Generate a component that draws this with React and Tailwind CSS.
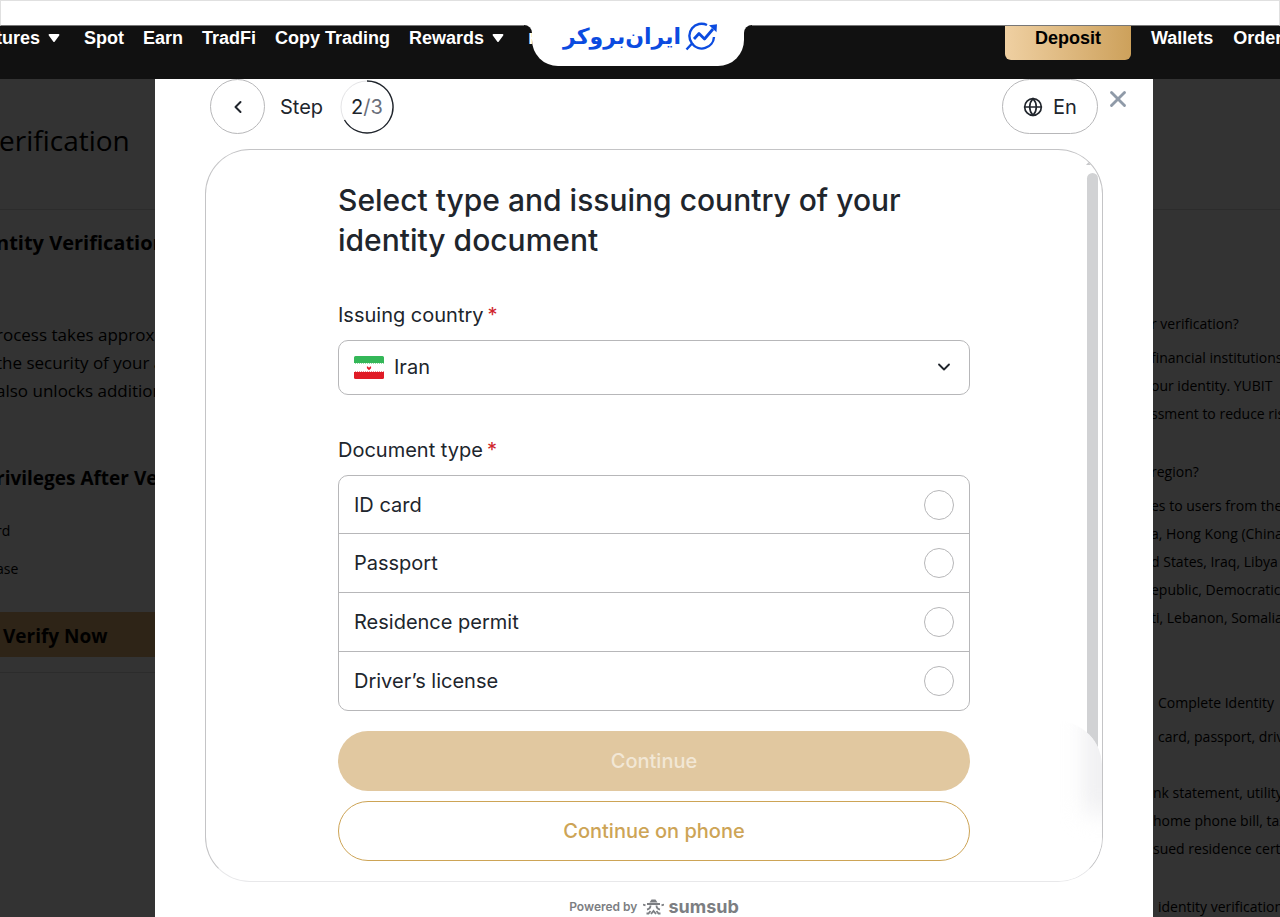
import React from "react";
import { X, Globe, ChevronLeft, ChevronDown } from "lucide-react";

const documentTypes = ["ID card", "Passport", "Residence permit", "Driver’s license"];

const faq = [
  {
    question: "r verification?",
    gap: "mt-[100px]",
    lines: ["financial institutions", "our identity. YUBIT", "ssment to reduce risk"],
  },
  {
    question: "region?",
    gap: "mt-[30px]",
    lines: [
      "es to users from the",
      "a, Hong Kong (China)",
      "d States, Iraq, Libya",
      "epublic, Democratic",
      "ti, Lebanon, Somalia",
    ],
  },
  {
    question: "Complete Identity",
    gap: "mt-[57px]",
    indent: true,
    lines: ["card, passport, driver", "", "nk statement, utility", "home phone bill, tax", "sued residence certif"],
  },
  { question: "identity verification", gap: "mt-[30px]", indent: true, lines: [] },
];

const Caret = () => (
  <svg width="12" height="8" viewBox="0 0 12 8" fill="currentColor" aria-hidden="true">
    <path d="M1.500 0h9c.8 0 1.200.8.7 1.400L6.800 7.400a1 1 0 0 1-1.600 0L.8 1.400C.3.8.7 0 1.500 0z" />
  </svg>
);

const BrokerMark = () => (
  <svg width="32" height="30" viewBox="0 0 32 30" fill="none" stroke="#0b4be0" strokeWidth="2.4" aria-hidden="true">
    <path d="M22 4A12.200 12.200 0 0 0 7 22.500L1.500 28.500" />
    <path d="M7 22.500A12.200 12.200 0 0 0 29 16" />
    <path d="M9 18l5-5.500 5.500 5.500L28 8" strokeLinejoin="round" strokeWidth="2.8" />
    <path d="M24 4.200l8-1-.5 8z" fill="#0b4be0" stroke="none" />
  </svg>
);

const IranFlag = () => (
  <svg width="30" height="24" viewBox="0 0 30 24" aria-hidden="true">
    <rect y="1" width="30" height="22" rx="1.500" fill="#fff" />
    <path d="M1.500 0h27A1.500 1.500 0 0 1 30 1.500V7.500H0V1.500A1.500 1.500 0 0 1 1.500 0z" fill="#34b758" />
    <path d="M0 15.500h30v6a1.500 1.500 0 0 1-1.500 1.500h-27A1.500 1.500 0 0 1 0 21.500z" fill="#e01b26" />
    <path d="M0 7.500h30M0 15.500h30" stroke="#fff" strokeWidth="1" strokeDasharray="1 1" />
    <path d="M13.500 10.500v1.500l1.500 1.500 1.500-1.500v-1.500M15 11v2.500" stroke="#e01b26" strokeWidth="1.200" fill="none" />
  </svg>
);

const SumsubMark = () => (
  <svg width="21" height="16" viewBox="0 0 21 16" fill="none" stroke="#7c7e82" strokeWidth="2" aria-hidden="true">
    <path d="M6.500 3.500L8.500.5h4l2 3z" fill="#7c7e82" stroke="none" />
    <path d="M4 5h13" />
    <path d="M0 5.500l2.500.8M18.500 6.300l2.500-.8" strokeWidth="1.800" />
    <path d="M7.500 6.500c0 2-1 3.500-3.500 4M13.500 6.500c0 2 1 3.500 3.500 4M3.500 14.500h2l2-2.500M17.500 14.500h-2l-2-2.500M8 15l2.500-3 2.500 3" strokeWidth="1.800" />
  </svg>
);

const BrokerTab = () => (
  <div className="absolute top-[25px] left-1/2 ml-[-116px] flex items-start">
    <span className="h-2 w-2 bg-white">
      <span className="block h-full rounded-tr-lg bg-[#111]"></span>
    </span>
    <div className="flex h-[41px] w-[212px] justify-center gap-1 rounded-b-[26px] bg-white pl-1">
      <span
        dir="rtl"
        className="-mt-2 whitespace-nowrap font-['DejaVu_Sans',sans-serif] text-[22px] leading-10 font-bold text-[#0b4be0]"
      >
        ایران‌بروکر
      </span>
      <span className="-mt-1">
        <BrokerMark />
      </span>
    </div>
    <span className="h-2 w-2 bg-white">
      <span className="block h-full rounded-tl-lg bg-[#111]"></span>
    </span>
  </div>
);

const TopBar = () => (
  <header className="relative">
    <div className="h-[26px] border border-b-[#777] border-[#e0e0e0] bg-white"></div>
    <div className="flex h-[53px] items-start justify-between overflow-hidden bg-[#111] font-['Liberation_Sans',sans-serif] text-lg leading-6 font-bold whitespace-nowrap text-white">
      <nav className="-ml-1 flex gap-[19px]">
        <a href="#futures" className="mr-[5px] flex items-center gap-2">
          tures <Caret />
        </a>
        <a href="#spot">Spot</a>
        <a href="#earn">Earn</a>
        <a href="#tradfi">TradFi</a>
        <a href="#copy">Copy Trading</a>
        <a href="#rewards" className="mr-[5px] flex items-center gap-2">
          Rewards <Caret />
        </a>
        <a href="#promo">P</a>
      </nav>
      <div className="flex w-[275px] shrink-0 gap-5">
        <button className="h-[34px] w-[126px] shrink-0 rounded-b-md bg-gradient-to-r from-[#efd0a2] to-[#cda15b] pb-[10px] text-black">
          Deposit
        </button>
        <a href="#wallets">Wallets</a>
        <a href="#orders">Orders</a>
      </div>
    </div>
    <BrokerTab />
  </header>
);

const LeftPage = () => (
  <aside className="w-[155px] shrink-0 overflow-hidden bg-[#333] font-['Open_Sans',sans-serif] whitespace-nowrap text-black">
    <div className="h-[131px] border-b border-[#2c2c2c] pt-[43px]">
      <h1 className="-ml-px text-[28px] leading-9 font-medium">erification</h1>
    </div>
    <h2 className="mt-[19px] -ml-1 text-xl leading-7 font-bold">ntity Verification</h2>
    <p className="mt-16 -ml-1 text-[17px] leading-[28px] font-medium">
      rocess takes approximately
      <br />
      the security of your account
      <br />
      also unlocks additional
    </p>
    <h2 className="mt-[59px] -ml-1 text-[19px] leading-7 font-bold">rivileges After Verification</h2>
    <p className="mt-5 -ml-1 text-sm leading-[38px] font-medium">
      rd
      <br />
      ase
    </p>
    <button className="mt-6 h-[45px] w-full bg-[#2e2417] pt-[3px] pl-[3px] text-left text-[19px] font-bold">Verify Now</button>
    <hr className="mt-[15px] border-[#2c2c2c]" />
  </aside>
);

const RightPage = () => (
  <aside className="w-[127px] shrink-0 overflow-hidden bg-[#333] font-['Open_Sans',sans-serif] text-sm leading-[28px] font-medium whitespace-nowrap text-black">
    <div className="h-[131px] border-b border-[#2c2c2c]"></div>
    {faq.map((item) => (
      <section key={item.question} className={`${item.gap} ${item.indent ? "pl-[5px]" : "-ml-0.5"}`}>
        <h3>{item.question}</h3>
        <div className="mt-[6px]">
          {item.lines.map((line, i) => (
            <p key={i} className={i > 1 && item.indent ? "-ml-[5px] min-h-[28px]" : "min-h-[28px]"}>
              {line}
            </p>
          ))}
        </div>
      </section>
    ))}
  </aside>
);

const StepHeader = () => (
  <div className="flex h-[55px] items-center pr-[55px] pl-[55px] text-xl">
    <button aria-label="Back" className="flex size-[55px] items-center justify-center rounded-full border border-[#b7b7b9]">
      <ChevronLeft size={20} strokeWidth={2.4} />
    </button>
    <span className="ml-[15px] w-[46px]">Step</span>
    <div className="relative ml-[14px] flex size-[54px] items-center justify-center">
      <svg className="absolute inset-0" width="54" height="54" viewBox="0 0 54 54" fill="none" aria-hidden="true">
        <circle cx="27" cy="27" r="26" stroke="#e4e4e6" />
        <path d="M27 1A26 26 0 1 1 4.500 40" stroke="#20252c" strokeWidth="1.400" />
      </svg>
      <span>2</span>
      <span className="text-[#6b6f7b]">/3</span>
    </div>
    <button className="ml-auto flex h-[55px] w-24 items-center justify-center gap-[10px] rounded-full border border-[#b7b7b9]">
      <Globe size={20} />
      En
    </button>
  </div>
);

const DocumentForm = () => (
  <form className="mx-auto w-[632px] max-w-full pt-[30px]">
    <h2 className="text-[30px] leading-10 font-medium">
      Select type and issuing country of your
      <br />
      identity document
    </h2>
    <label htmlFor="country" className="mt-[41px] block text-xl leading-[28px]">
      Issuing country<span className="ml-1 text-[#d0242b]">*</span>
    </label>
    <div className="relative mt-[11px]">
      <select id="country" className="h-[55px] w-full appearance-none rounded-[10px] border border-[#b7b7b9] bg-white pb-0.5 pl-[55px] text-xl">
        <option>Iran</option>
      </select>
      <span className="pointer-events-none absolute top-4 left-4">
        <IranFlag />
      </span>
      <ChevronDown size={20} strokeWidth={2.2} className="pointer-events-none absolute top-[17px] right-4" />
    </div>
    <fieldset className="mt-[41px]">
      <legend className="text-xl leading-[28px]">
        Document type<span className="ml-1 text-[#d0242b]">*</span>
      </legend>
      <div className="mt-[11px] divide-y divide-[#b7b7b9] rounded-[10px] border border-[#b7b7b9] text-xl">
        {documentTypes.map((type) => (
          <label key={type} className="flex h-[59px] items-center justify-between px-[15px] first:h-[58px] last:h-[58px]">
            {type}
            <input type="radio" name="document" className="size-[30px] appearance-none rounded-full border border-[#b7b7b9] bg-white" />
          </label>
        ))}
      </div>
    </fieldset>
    <div className="relative z-10 mt-5 space-y-[10px] text-xl font-medium">
      <button type="submit" className="block h-[60px] w-full rounded-full bg-[#e1c8a0] text-[#f2e7d5]">
        Continue
      </button>
      <button type="button" className="block h-[60px] w-full rounded-full border border-[#cda456] bg-white text-[#cda456]">
        Continue on phone
      </button>
    </div>
  </form>
);

const Scrollbar = () => (
  <div className="pointer-events-none absolute top-0 right-0 h-full w-[60px]" aria-hidden="true">
    <svg className="absolute top-[10px] right-[7px]" width="9" height="5" viewBox="0 0 9 5">
      <path d="M4.500 0L9 5H0z" fill="#c8c9cb" />
    </svg>
    <div className="absolute top-[23px] right-1 h-[600px] w-[11px] rounded-full bg-[#d1d2d4]"></div>
    {/* frosted action bar that lies over the end of the thumb */}
    <div className="absolute right-0 bottom-0 h-[160px] w-full overflow-hidden rounded-tr-[45px] bg-white">
      <div className="absolute -top-2 -right-3 h-[100px] w-7 bg-[#ededef] blur-md"></div>
    </div>
  </div>
);

const App = () => {
  return (
    <div className="flex min-h-screen flex-col overflow-hidden bg-white">
      <TopBar />
      <div className="flex flex-1">
        <LeftPage />
        <main className="relative min-w-0 flex-1 font-['Inter',sans-serif] text-[#20252c]">
          <StepHeader />
          <button aria-label="Close" className="absolute top-1 right-[19px] text-[#8f9aa8]">
            <X size={32} strokeWidth={2.6} className="p-[3px]" />
          </button>
          <div className="relative mx-[50px] mt-[15px] h-[733px] overflow-hidden rounded-[45px] border border-[#c4c4c6] border-b-[#e8e8ea]">
            <Scrollbar />
            <DocumentForm />
          </div>
          <div className="mt-[14px] flex h-[21px] items-center justify-center text-xs font-semibold text-[#7c7e82]">
            Powered by
            <span className="mr-1 ml-[6px]">
              <SumsubMark />
            </span>
            <span className="text-lg leading-5 font-bold">sumsub</span>
          </div>
        </main>
        <RightPage />
      </div>
    </div>
  );
};

export default App;
